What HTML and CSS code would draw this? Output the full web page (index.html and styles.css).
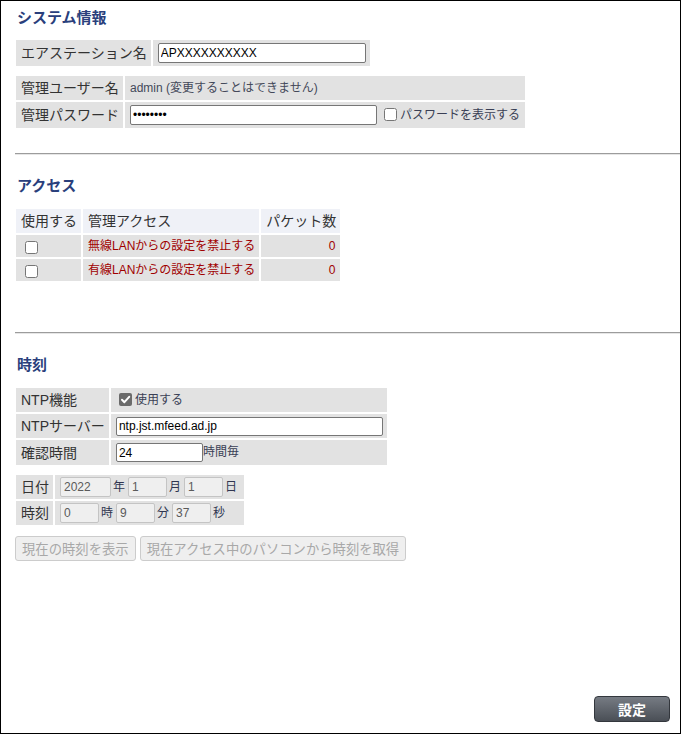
FILE: index.html
```html
<!DOCTYPE html>
<html lang="ja">
<head>
<meta charset="utf-8">
<title>システム情報</title>
<link rel="stylesheet" href="styles.css">
</head>
<body>
<div class="page">
  <h2 class="sec-title t-first">システム情報</h2>
  <table class="grid t-name">
    <tr class="h26">
      <td class="lbl">エアステーション名</td>
      <td><input class="txt w208" type="text" value="APXXXXXXXXXX"></td>
    </tr>
  </table>
  <table class="grid t-gap6">
    <tr class="h24">
      <td class="lbl">管理ユーザー名</td>
      <td class="note">admin (変更することはできません)</td>
    </tr>
    <tr class="h26">
      <td class="lbl">管理パスワード</td>
      <td class="pwcell"><input class="txt w247" type="password" value="password"><label class="showpw"><input class="cb cb-pw" type="checkbox">パスワードを表示する</label></td>
    </tr>
  </table>

  <hr class="rule rule-1">

  <h2 class="sec-title">アクセス</h2>
  <table class="grid t-access">
    <tr class="h24 head">
      <td>使用する</td>
      <td>管理アクセス</td>
      <td>パケット数</td>
    </tr>
    <tr class="h22">
      <td><input class="cb cb-row" type="checkbox"></td>
      <td class="red">無線LANからの設定を禁止する</td>
      <td class="red num">0</td>
    </tr>
    <tr class="h22">
      <td><input class="cb cb-row" type="checkbox"></td>
      <td class="red">有線LANからの設定を禁止する</td>
      <td class="red num">0</td>
    </tr>
  </table>

  <hr class="rule rule-2">

  <h2 class="sec-title">時刻</h2>
  <table class="grid t-ntp">
    <tr class="h24">
      <td class="lbl">NTP機能</td>
      <td class="note2"><span class="fakecb"><svg viewBox="0 0 13 13" width="13" height="13"><rect x="0" y="0" width="13" height="13" rx="2" fill="#6b6b6b"/><path d="M3 6.8 L5.4 9.2 L10.2 3.8" stroke="#fff" stroke-width="2" fill="none" stroke-linecap="round" stroke-linejoin="round"/></svg></span>使用する</td>
    </tr>
    <tr class="h24">
      <td class="lbl">NTPサーバー</td>
      <td><input class="txt w267 h19" type="text" value="ntp.jst.mfeed.ad.jp"></td>
    </tr>
    <tr class="h25">
      <td class="lbl">確認時間</td>
      <td class="note2"><input class="txt w87 h19" type="text" value="24">時間毎</td>
    </tr>
  </table>
  <table class="grid t-gap6 t-date">
    <tr class="h24">
      <td class="lbl">日付</td>
      <td class="units"><input class="dis w51" type="text" value="2022" disabled><span class="u">年</span><input class="dis w39" type="text" value="1" disabled><span class="u">月</span><input class="dis w39" type="text" value="1" disabled><span class="u">日</span></td>
    </tr>
    <tr class="h24">
      <td class="lbl">時刻</td>
      <td class="units"><input class="dis w39" type="text" value="0" disabled><span class="u">時</span><input class="dis w39" type="text" value="9" disabled><span class="u">分</span><input class="dis w39" type="text" value="37" disabled><span class="u">秒</span></td>
    </tr>
  </table>
  <div class="btnrow">
    <button class="btn-dis" type="button" disabled>現在の時刻を表示</button>
    <button class="btn-dis" type="button" disabled>現在アクセス中のパソコンから時刻を取得</button>
  </div>

  <button class="btn-set" type="button">設定</button>
</div>
</body>
</html>
```

FILE: styles.css
```css
html, body {
  margin: 0;
  padding: 0;
  background: #fff;
}

body {
  font-family: "Liberation Sans", "Noto Sans CJK JP", sans-serif;
  font-size: 14px;
  color: #333;
}

.page {
  box-sizing: border-box;
  width: 681px;
  height: 734px;
  border: 1px solid #000;
  padding: 0 0 11px 13px;
  display: flex;
  flex-direction: column;
  align-items: flex-start;
}

.sec-title {
  margin: 21px 0 0 0;
  padding-left: 3px;
  font-size: 15px;
  line-height: 20px;
  font-weight: bold;
  color: #2a3f7c;
}

.t-first {
  margin-top: 7px;
}

.grid {
  border-collapse: separate;
  border-spacing: 2px;
  margin-top: 11px;
}

.t-name {
  margin-top: 10px;
}

.t-gap6 {
  margin-top: 6px;
}

.grid td {
  box-sizing: border-box;
  padding: 0 4px 0 5px;
  background: #e2e2e2;
  line-height: 18px;
  white-space: nowrap;
  vertical-align: middle;
}

.h22 td { height: 22px; }
.h24 td { height: 24px; }
.h25 td { height: 25px; }
.h26 td { height: 26px; }

.lbl {
  color: #333;
}

.note {
  font-size: 12px;
  color: #44495a;
}

.note2 {
  font-size: 12px;
  color: #3a3f55;
}

.txt {
  box-sizing: border-box;
  height: 20px;
  margin: 0;
  padding: 0 2px;
  border: 1px solid #767676;
  border-radius: 2px;
  background: #fff;
  font-family: "Liberation Sans", sans-serif;
  font-size: 12px;
  color: #000;
  vertical-align: middle;
}

.grid td.pwcell,
.grid td.t-pad5 {
  padding-right: 5px;
}

.h19 { height: 19px; }
.w208 { width: 208px; }
.w247 { width: 247px; }
.w267 { width: 267px; }
.w87 { width: 87px; }
.w51 { width: 51px; }
.w39 { width: 39px; }

.showpw {
  font-size: 12px;
  color: #3a3f55;
  vertical-align: middle;
}

.cb {
  width: 13px;
  height: 13px;
  margin: 0;
  vertical-align: middle;
}

.cb-pw {
  margin: 0 3px 0 7px;
  position: relative;
  top: -1px;
}

.cb-row {
  margin-left: 4px;
}

.rule {
  align-self: stretch;
  height: 0;
  margin: 0 0 0 1px;
  border: 0;
  border-top: 1px solid #9c9c9c;
  border-bottom: 1px solid #e6e6e6;
}

.rule-1 { margin-top: 23px; }
.rule-2 { margin-top: 49px; }

.t-access .head td {
  background: #eff1f7;
  color: #333;
}

.red {
  font-size: 12px;
  color: #a00000;
}

.grid td.num {
  text-align: right;
  padding-right: 5px;
}

.fakecb {
  display: inline-block;
  width: 13px;
  height: 13px;
  margin: 0 3px 0 3px;
  vertical-align: middle;
  position: relative;
  top: -1px;
}

.fakecb svg {
  display: block;
}

.units {
  font-size: 12px;
  color: #2f3550;
}

.dis {
  box-sizing: border-box;
  height: 20px;
  margin: 0;
  padding: 0 3px;
  border: 1px solid #c4c4c4;
  border-radius: 2px;
  background: #efefef;
  font-family: "Liberation Sans", sans-serif;
  font-size: 12px;
  color: #5a5a5a;
  vertical-align: middle;
}

.u {
  display: inline-block;
  margin: 0 3px 0 2px;
  vertical-align: middle;
}

.btnrow {
  display: flex;
  gap: 4px;
  margin-top: 9px;
  margin-left: 1px;
}

.btn-dis {
  box-sizing: border-box;
  height: 25px;
  margin: 0;
  padding: 0 6px;
  border: 1px solid #cccccc;
  border-radius: 3px;
  background: #efefef;
  font-family: "Liberation Sans", "Noto Sans CJK JP", sans-serif;
  font-size: 13.333px;
  color: #a8a8a8;
}

.btn-set {
  box-sizing: border-box;
  align-self: flex-end;
  margin: auto 10px 0 0;
  width: 76px;
  height: 26px;
  padding: 0;
  border: 1px solid #33373d;
  border-radius: 4px;
  background: linear-gradient(#767b83, #4a4f56);
  font-family: "Liberation Sans", "Noto Sans CJK JP", sans-serif;
  font-size: 14px;
  font-weight: bold;
  color: #fff;
}
```
